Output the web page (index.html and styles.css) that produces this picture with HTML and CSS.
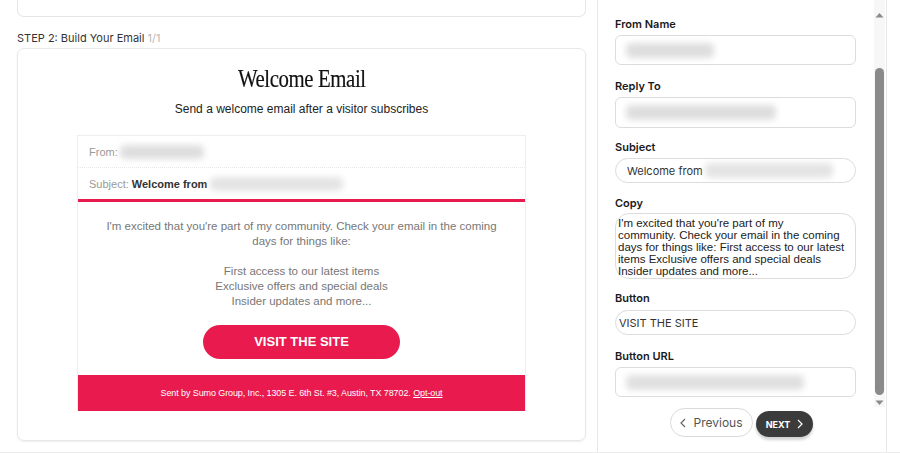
FILE: index.html
```html
<!DOCTYPE html>
<html>
<head>
<meta charset="utf-8">
<link rel="stylesheet" href="styles.css">
</head>
<body>
<div class="app">
  <div class="left">
    <div class="top-card"></div>
    <div class="step-title">STEP 2: Build Your Email <span class="step-count">1/1</span></div>
    <div class="email-card">
      <div class="email-title"><span class="email-title-text">Welcome Email</span></div>
      <div class="email-sub">Send a welcome email after a visitor subscribes</div>
      <div class="email-box">
        <div class="meta-row from-row"><span class="meta-label">From:</span><span class="blur blur-from"></span></div>
        <div class="meta-row subject-row"><span class="meta-label">Subject:</span>&nbsp;<b class="meta-strong">Welcome from</b><span class="blur blur-subject"></span></div>
        <div class="email-body">
          <p class="body-text">I'm excited that you're part of my community. Check your email in the coming days for things like:</p>
          <p class="body-text body-list">First access to our latest items<br>Exclusive offers and special deals<br>Insider updates and more...</p>
          <div class="cta-wrap"><span class="cta">VISIT THE SITE</span></div>
        </div>
        <div class="email-footer">Sent by Sumo Group, Inc., 1305 E. 6th St. #3, Austin, TX 78702. <span class="optout">Opt-out</span></div>
      </div>
    </div>
  </div>
  <div class="right">
    <div class="form">
      <div class="field f1">
        <div class="label">From Name</div>
        <div class="input box h30"><span class="blur blur-name"></span></div>
      </div>
      <div class="field f2">
        <div class="label">Reply To</div>
        <div class="input box h31"><span class="blur blur-reply"></span></div>
      </div>
      <div class="field f3">
        <div class="label">Subject</div>
        <div class="input pill h25"><span class="in-text">Welcome from</span><span class="blur blur-subj2"></span></div>
      </div>
      <div class="field f4">
        <div class="label">Copy</div>
        <div class="textarea">I'm excited that you're part of my<br>community. Check your email in the coming days for things like: First access to our latest items Exclusive offers and special deals Insider updates and more...</div>
      </div>
      <div class="field f5">
        <div class="label">Button</div>
        <div class="input pill h25 btn-in"><span class="in-text">VISIT THE SITE</span></div>
      </div>
      <div class="field f6">
        <div class="label">Button URL</div>
        <div class="input box h30"><span class="blur blur-url"></span></div>
      </div>
      <div class="nav">
        <span class="btn-prev"><svg class="chev" width="6" height="10" viewBox="0 0 6 10"><path d="M5 1 L1 5 L5 9" fill="none" stroke="#666" stroke-width="1.2"/></svg>Previous</span>
        <span class="btn-next">NEXT<svg class="chev" width="6" height="10" viewBox="0 0 6 10"><path d="M1 1 L5 5 L1 9" fill="none" stroke="#fff" stroke-width="1.2"/></svg></span>
      </div>
    </div>
    <div class="scrollbar">
      <svg class="arrow" width="11" height="8" viewBox="0 0 11 8"><path d="M1.5 6.5 L5.5 2 L9.5 6.5 Z" fill="#8a8a8a"/></svg>
      <div class="thumb-space"><div class="thumb"></div></div>
      <svg class="arrow" width="11" height="8" viewBox="0 0 11 8"><path d="M1.5 1.5 L5.5 6 L9.5 1.5 Z" fill="#8a8a8a"/></svg>
    </div>
  </div>
</div>
</body>
</html>
```

FILE: styles.css
```css
* { box-sizing: border-box; }
html, body { margin: 0; padding: 0; }
body {
  width: 900px;
  height: 453px;
  overflow: hidden;
  background: #fff;
  font-family: Inter, "Liberation Sans", Arial, sans-serif;
  color: #222;
}
.app {
  display: flex;
  height: 453px;
  border-bottom: 1px solid #ececec;
}
.left {
  width: 598px;
  border-right: 1px solid #e8e8e8;
  padding: 0 11px 0 17px;
}
.top-card {
  height: 17px;
  border: 1px solid #e6e6e6;
  border-top: none;
  border-radius: 0 0 7px 7px;
}
.step-title {
  margin-top: 14px;
  font-size: 11px;
  line-height: 14px;
  color: #333;
}
.step-count { color: #b8b8b8; }
.email-card {
  margin-top: 3px;
  height: 393px;
  border: 1px solid #e8e8e8;
  border-radius: 7px;
  box-shadow: 0 1px 2px rgba(0,0,0,0.07);
  padding-top: 15px;
}
.email-title {
  text-align: center;
  height: 30px;
  line-height: 30px;
}
.email-title-text {
  display: inline-block;
  font-family: "Liberation Serif", "Times New Roman", serif;
  font-size: 26px;
  letter-spacing: -0.5px;
  color: #111;
  transform: scaleX(0.8);
  -webkit-text-stroke: 0.2px #111;
}
.email-sub {
  margin-top: 7px;
  text-align: center;
  font-family: "Liberation Sans", Arial, sans-serif;
  font-size: 12px;
  line-height: 16px;
  color: #222;
}
.email-box {
  width: 449px;
  margin: 18px auto 0;
  border: 1px solid #eeeeee;
  border-bottom: none;
  font-family: "Liberation Sans", Arial, sans-serif;
}
.meta-row {
  display: flex;
  align-items: center;
  padding-left: 11px;
  font-size: 11px;
  color: #999;
}
.from-row {
  height: 32px;
  border-bottom: 1px dotted #e8e8e8;
}
.subject-row {
  height: 34px;
  border-bottom: 3px solid #e91b4e;
}
.meta-strong { color: #333; font-weight: bold; }
.blur {
  display: inline-block;
  height: 14px;
  background: #dedede;
  border-radius: 5px;
  filter: blur(3px);
}
.blur-from { width: 84px; margin-left: 2px; }
.blur-subject { width: 133px; margin-left: 3px; background: #e4e4e4; }
.email-body {
  padding-top: 17px;
  text-align: center;
}
.body-text {
  margin: 0;
  padding: 0 20px;
  font-size: 11.5px;
  line-height: 15px;
  color: #777;
}
.body-list { margin-top: 15px; }
.cta-wrap {
  margin-top: 16px;
  padding-bottom: 16px;
}
.cta {
  display: inline-block;
  width: 197px;
  height: 34px;
  line-height: 34px;
  border-radius: 17px;
  background: #e91b4e;
  color: #fff;
  font-weight: bold;
  font-size: 13px;
}
.email-footer {
  height: 36px;
  background: #e91b4e;
  color: #fff;
  font-size: 9px;
  line-height: 36px;
  text-align: center;
  letter-spacing: -0.1px;
}
.optout { text-decoration: underline; }

.right {
  width: 289px;
  display: flex;
  border-right: 1px solid #e8e8e8;
  padding-left: 17px;
  padding-right: 1px;
}
.form {
  width: 241px;
  margin-right: 18px;
  padding-top: 17px;
}
.label {
  font-size: 11px;
  font-weight: 600;
  line-height: 14px;
  color: #1a1a1a;
  margin-bottom: 4px;
}
.f2 { margin-top: 14px; }
.f3 { margin-top: 12px; }
.f4 { margin-top: 13px; }
.f4 .label { margin-bottom: 3px; }
.f5 { margin-top: 12px; }
.f5 .label { margin-bottom: 5px; }
.f6 { margin-top: 14px; }
.input {
  display: flex;
  align-items: center;
  border: 1px solid #dcdcdc;
  background: #fff;
  padding-left: 10px;
}
.box { border-radius: 6px; }
.pill { border-radius: 13px; }
.h30 { height: 30px; }
.h31 { height: 31px; }
.h25 { height: 25px; }
.in-text {
  font-size: 11px;
  color: #333;
}
.pill .in-text { padding-left: 1px; }
.btn-in { padding-left: 2px; }
.blur-name { width: 88px; height: 15px; background: #dedede; }
.blur-reply { width: 150px; height: 15px; background: #dedede; }
.blur-subj2 { width: 128px; height: 15px; margin-left: 2px; background: #e4e4e4; }
.blur-url { width: 178px; height: 15px; background: #e0e0e0; }
.textarea {
  height: 66px;
  border: 1px solid #dcdcdc;
  border-radius: 14px;
  padding: 3px 6px 0 2px;
  font-family: "Liberation Sans", Arial, sans-serif;
  font-size: 11.5px;
  line-height: 12px;
  color: #222;
}
.nav {
  margin-top: 11px;
  padding-left: 12px;
  display: flex;
  justify-content: center;
  align-items: flex-start;
  gap: 3px;
}
.btn-prev {
  display: flex;
  align-items: center;
  justify-content: center;
  gap: 7px;
  width: 83px;
  height: 29px;
  border: 1px solid #dadada;
  border-radius: 15px;
  font-size: 12px;
  color: #555;
  background: #fff;
}
.btn-next {
  margin-top: 3px;
  display: flex;
  align-items: center;
  justify-content: center;
  gap: 7px;
  width: 57px;
  height: 26px;
  border-radius: 13px;
  background: #3b3b3b;
  color: #fff;
  font-size: 9px;
  font-weight: 700;
  box-shadow: 0 3px 3px rgba(0,0,0,0.18);
}
.chev { display: block; }
.scrollbar {
  width: 11px;
  height: 407px;
  background: #f7f7f7;
  display: flex;
  flex-direction: column;
  padding-top: 11px;
}
.arrow { display: block; }
.thumb-space {
  height: 380px;
  padding-top: 49px;
  padding-bottom: 4px;
  display: flex;
}
.thumb {
  flex: 1;
  margin: 0 1px;
  background: #8a8a8a;
  border-radius: 5px;
}
```
